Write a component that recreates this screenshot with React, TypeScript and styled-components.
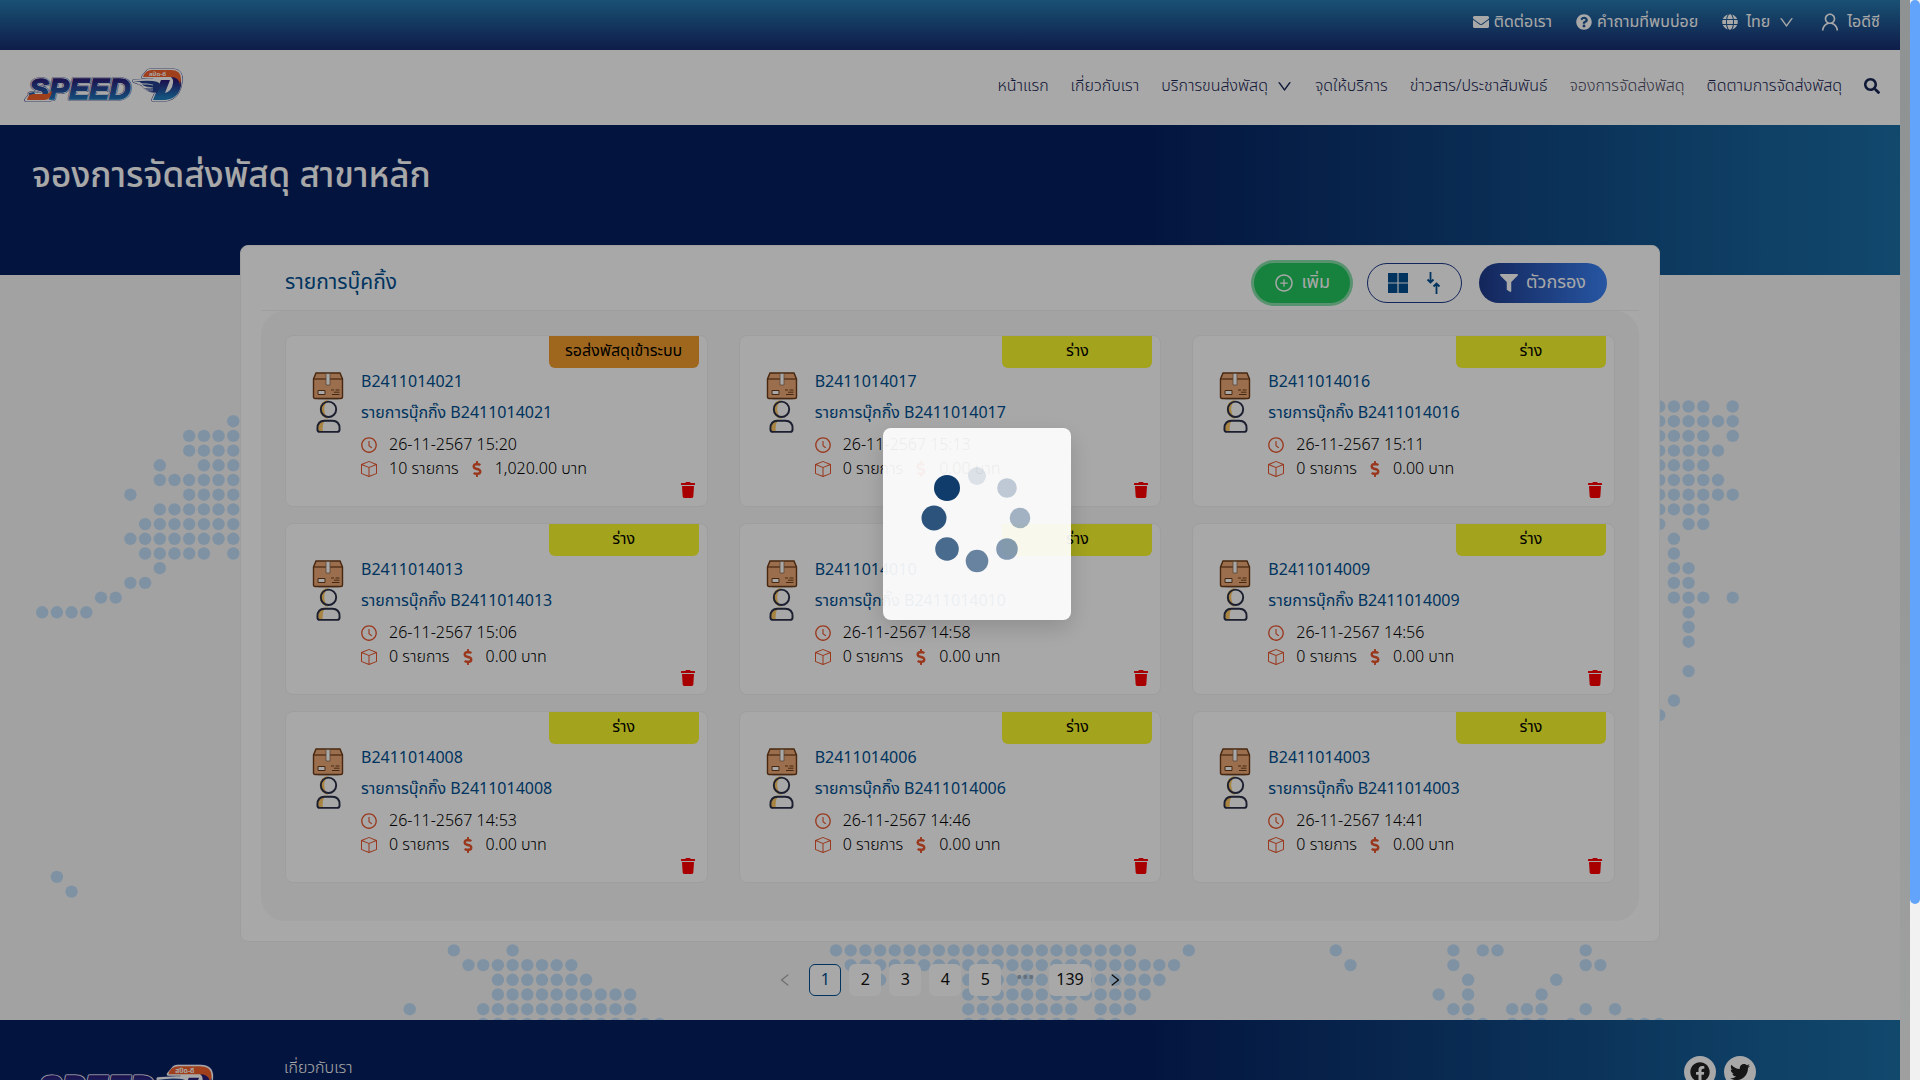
import React from "react";
import styled, { createGlobalStyle } from "styled-components";
import {
  FaEnvelope,
  FaQuestionCircle,
  FaGlobe,
  FaSearch,
  FaFilter,
  FaTrash,
  FaDollarSign,
  FaFacebook,
  FaTwitter,
} from "react-icons/fa";
import {
  AiOutlineDown,
  AiOutlineUser,
  AiOutlinePlusCircle,
  AiOutlineClockCircle,
  AiOutlineLeft,
  AiOutlineRight,
} from "react-icons/ai";
import { BsBox } from "react-icons/bs";

const navy = "#06205f";
const brandBlue = "#004f91";
const ink = "#172554";
const accent = "#e8552d";

const GlobalStyle = createGlobalStyle`
  *, *::before, *::after { box-sizing: border-box; }
  body {
    margin: 0;
    font-family: "Noto Sans Thai", "Noto Sans", "Liberation Sans", sans-serif;
    font-size: 16px;
    line-height: 24px;
    color: #000;
    overflow: hidden;
  }
  a { color: inherit; text-decoration: none; }
  button { font: inherit; color: inherit; border: 0; background: none; padding: 0; cursor: pointer; }
  h1, h2, h3, p, ul { margin: 0; padding: 0; font-weight: 400; }
  ul { list-style: none; }
  svg { display: block; flex: none; }
`;

const Viewport = styled.div`
  height: 100vh;
  overflow: hidden;
  display: grid;
  grid-template-columns: minmax(0, 1fr) 10px 10px;
`;

const Page = styled.div`
  background: #f6f6f6;
  min-width: 0;
`;

const Gutter = styled.div`
  background: linear-gradient(#d8dede, #f6f6f6);
`;

const ScrollTrack = styled.div`
  height: 100vh;
  background: #f1f1f1;
`;

const ScrollThumb = styled.div<{ $share: number }>`
  height: ${(p) => p.$share * 100}%;
  border-radius: 5px;
  background: #62a4fb;
`;

const TopBar = styled.div`
  display: flex;
  justify-content: flex-end;
  align-items: center;
  gap: 24px;
  height: 50px;
  padding: 0 20px 6px;
  color: #fff;
  background: linear-gradient(#277bb0, #172c70);
`;

const TopLink = styled.a<{ $gap?: number }>`
  display: flex;
  align-items: center;
  gap: ${(p) => p.$gap ?? 5}px;
`;

const NavBar = styled.header`
  display: flex;
  justify-content: space-between;
  align-items: center;
  height: 75px;
  padding: 0 20px 3px 24px;
  background: #fff;
  color: ${ink};
`;

const NavList = styled.nav`
  display: flex;
  align-items: center;
  gap: 22px;
  font-weight: 300;
`;

const NavLink = styled.a<{ $active?: boolean }>`
  display: flex;
  align-items: center;
  gap: 8px;
  color: ${(p) => (p.$active ? "#4a4a63" : ink)};
`;

const Hero = styled.section`
  height: 150px;
  padding: 28px 32px;
  color: #fff;
  background: linear-gradient(90deg, ${navy} 60%, #1b6fa6);
`;

const HeroTitle = styled.h1`
  font-size: 35px;
  line-height: 48px;
  font-weight: 500;
`;

const Main = styled.main`
  position: relative;
  display: flex;
  flex-direction: column;
  align-items: center;
  gap: 22px;
  padding-bottom: 24px;
`;

const MapBackdrop = styled.svg`
  position: absolute;
  inset: 0;
  width: 100%;
  height: 100%;
  fill: #c1def9;
`;

const Panel = styled.section`
  position: relative;
  width: 100%;
  max-width: 1420px;
  margin-top: -30px;
  padding: 0 20px 20px;
  border: 1px solid #f0f0f0;
  border-radius: 8px;
  background: #fff;
`;

const PanelHead = styled.div`
  display: flex;
  justify-content: space-between;
  align-items: center;
  height: 65px;
  padding: 9px 32px 0 24px;
  border-bottom: 1px solid #f0f0f0;
`;

const PanelTitle = styled.h2`
  font-size: 21px;
  line-height: 32px;
  color: ${brandBlue};
`;

const Actions = styled.div`
  display: flex;
  gap: 17px;
`;

const PillButton = styled.button<{ $kind: "add" | "view" | "filter" }>`
  display: flex;
  align-items: center;
  justify-content: center;
  gap: ${(p) => (p.$kind === "view" ? 18 : 8)}px;
  height: 40px;
  padding: 0 ${(p) => (p.$kind === "filter" ? 21 : 20)}px;
  border-radius: 20px;
  font-size: 18px;
  color: ${(p) => (p.$kind === "view" ? brandBlue : "#fff")};
  border: ${(p) => (p.$kind === "view" ? "1px solid #1e3a8a" : "0")};
  background: ${(p) =>
    p.$kind === "add"
      ? "#22c55e"
      : p.$kind === "filter"
        ? "linear-gradient(90deg, #1e3a8a, #3b82f6)"
        : "#fff"};
  box-shadow: ${(p) => (p.$kind === "add" ? "0 0 0 3px #86dea8" : "none")};
`;

const CardGrid = styled.ul`
  display: grid;
  grid-template-columns: repeat(3, minmax(0, 1fr));
  gap: 16px 31px;
  padding: 24px 24px 38px;
  border-radius: 24px;
  background: #f7f7f7;
`;

const Card = styled.li`
  display: grid;
  grid-template-columns: 32px minmax(0, 1fr);
  column-gap: 17px;
  height: 172px;
  padding: 0 8px 8px 26px;
  border: 1px solid #f0f0f0;
  border-radius: 8px;
  background: #fff;
`;

const Status = styled.p<{ $waiting: boolean }>`
  grid-column: 1 / -1;
  justify-self: end;
  width: 150px;
  height: 32px;
  line-height: 30px;
  text-align: center;
  border-radius: 0 0 6px 6px;
  background: ${(p) => (p.$waiting ? "#f29d2c" : "#f7f72d")};
`;

const CardIcons = styled.div`
  display: flex;
  flex-direction: column;
  align-items: center;
  padding-top: 3px;
`;

const CardBody = styled.div`
  display: flex;
  flex-direction: column;
  padding-top: 1px;
`;

const CardLine = styled.h3`
  font-size: 16px;
  line-height: 24px;
  margin-bottom: 7px;
  color: ${brandBlue};
`;

const MetaList = styled.div`
  margin-top: 1px;
  font-weight: 300;
`;

const Meta = styled.p`
  display: flex;
  align-items: center;
  gap: 12px;
  font-weight: inherit;
  & > svg {
    width: 12px;
    color: ${accent};
  }
  & > svg:first-child {
    width: 18px;
    margin: 0 -1px;
  }
`;

const DeleteButton = styled.button`
  grid-column: 1 / -1;
  justify-self: end;
  align-self: end;
  margin-right: 3px;
  color: #ff0000;
`;

const Pagination = styled.nav`
  position: relative;
  display: flex;
  gap: 8px;
`;

const PageButton = styled.button<{ $current?: boolean; $plain?: boolean }>`
  display: flex;
  align-items: center;
  justify-content: center;
  min-width: 32px;
  height: 32px;
  padding: 0 6px;
  border-radius: 6px;
  border: 1px solid ${(p) => (p.$current ? brandBlue : "transparent")};
  background: ${(p) => (p.$plain ? "transparent" : "#fff")};
  color: ${(p) => (p.$current ? brandBlue : "#111")};
  &:disabled { color: #aaa; }
`;

const Ellipsis = styled.span`
  width: 32px;
  line-height: 28px;
  text-align: center;
  color: #9aaaba;
`;

const Footer = styled.footer`
  display: flex;
  align-items: flex-start;
  min-height: 260px;
  padding: 36px 144px 0 33px;
  color: #fff;
  font-weight: 300;
  background: linear-gradient(90deg, ${navy} 60%, #1b6fa6);
`;

const FooterLogo = styled.div`
  width: 251px;
  padding-top: 8px;
`;

const Social = styled.div`
  display: flex;
  gap: 8px;
  margin-left: auto;
`;

const SocialLink = styled.a`
  display: grid;
  place-items: center;
  width: 32px;
  height: 32px;
  border-radius: 50%;
  background: #fff;
  color: #222;
`;

const Backdrop = styled.div`
  position: fixed;
  inset: 0 10px 0 0;
  background: rgba(0, 0, 0, 0.34);
`;

const LoaderBox = styled.div`
  position: absolute;
  left: 883px;
  top: 428px;
  width: 188px;
  height: 192px;
  border-radius: 8px;
  background: rgba(255, 255, 255, 0.92);
  box-shadow: 0 8px 24px rgba(0, 0, 0, 0.16);
`;

/* Dotted world map: each entry is [row, first column, last column]. */
const dotRuns: number[][] = [
  [0, 112, 115], [0, 117, 117],
  [1, 15, 15], [1, 112, 117],
  [2, 12, 15], [2, 112, 115], [2, 117, 117],
  [3, 12, 15], [3, 112, 116],
  [4, 10, 10], [4, 13, 15], [4, 112, 115],
  [5, 10, 15], [5, 112, 116],
  [6, 8, 8], [6, 12, 15], [6, 112, 117],
  [7, 10, 15], [7, 112, 115],
  [8, 9, 15], [8, 112, 112], [8, 114, 115],
  [9, 8, 15], [9, 113, 113],
  [10, 9, 13], [10, 15, 15], [10, 113, 113],
  [11, 10, 10], [11, 113, 114],
  [12, 8, 9], [12, 113, 114],
  [13, 6, 7], [13, 113, 115], [13, 117, 117],
  [14, 2, 5], [14, 114, 114],
  [15, 114, 114], [16, 114, 114], [18, 114, 114],
  [20, 113, 113], [21, 112, 112],
  [32, 3, 3], [33, 4, 4],
  [37, 30, 30], [37, 34, 34], [37, 56, 76], [37, 80, 80], [37, 90, 90], [37, 98, 98], [37, 100, 101], [37, 107, 107],
  [38, 31, 38], [38, 57, 79], [38, 91, 91], [38, 98, 98], [38, 107, 108],
  [39, 33, 39], [39, 59, 59], [39, 65, 78], [39, 99, 99], [39, 105, 105],
  [40, 33, 42], [40, 65, 77], [40, 97, 97], [40, 99, 99], [40, 104, 104],
  [41, 27, 27], [41, 32, 42], [41, 65, 72], [41, 74, 76], [41, 98, 99], [41, 102, 104], [41, 107, 107], [41, 109, 109],
  [42, 32, 44], [42, 65, 72], [42, 74, 75], [42, 99, 100], [42, 102, 104], [42, 106, 106], [42, 110, 112],
];

function WorldMap() {
  const dots: React.ReactElement[] = [];
  dotRuns.forEach(([row, from, to]) => {
    for (let col = from; col <= to; col++) {
      dots.push(
        <circle key={`${row}-${col}`} cx={12.8 + 14.7 * col} cy={131.5 + 14.7 * row} r="6.2" />
      );
    }
  });
  return (
    <MapBackdrop viewBox="0 0 1900 745" preserveAspectRatio="xMidYMin slice" aria-hidden="true">
      {dots}
    </MapBackdrop>
  );
}

const crestOutline =
  "M119 9l5-6q1-1 3-1h20q10 0 10 9-1 19-16 21h-12l4-9q-9 1-15-7l-8-3 20-1 5-3z";

function Logo({ width, id }: { width: number; id: string }) {
  const word = {
    fontFamily: '"Liberation Sans", Arial, sans-serif',
    fontWeight: 700,
    fontStyle: "italic",
  } as const;
  return (
    <svg width={width} viewBox="0 0 160 36" role="img" aria-label="Speed-D">
      <defs>
        <linearGradient id={`${id}-fill`} x1="0" y1="0" x2="0" y2="1">
          <stop offset="0.2" stopColor="#2a1c78" />
          <stop offset="0.9" stopColor="#1f7fc0" />
        </linearGradient>
      </defs>
      <g strokeLinejoin="round">
        <g fill="#2b3585" stroke="#2b3585" strokeWidth="3.600">
          <path d="M2 32h24l4-6H7z" />
          <text x="5" y="31" fontSize="30" {...word}>SPEED</text>
          <path d={crestOutline} />
        </g>
        <g fill="#fff" stroke="#fff" strokeWidth="2.800">
          <path d="M2 32h24l4-6H7z" />
          <text x="5" y="31" fontSize="30" {...word}>SPEED</text>
          <path d={crestOutline} />
        </g>
      </g>
      <text x="5" y="31" fontSize="30" fill={`url(#${id}-fill)`} stroke={`url(#${id}-fill)`} strokeWidth="1.400" {...word}>
        SPEED
      </text>
      <path d="M3 32q1-6 6-6h14l5-3q-1 9-8 9z" fill="#f2602a" />
      <path d="M137 12l-8 20h12q13-1 16-14 1-7-3-10h-9q5 2 4 7-1 8-8 10l5-13z" fill={`url(#${id}-fill)`} />
      <path d="M119 9q2-7 9-7h19q10 0 10 9l-1 6q-1-8-9-8z" fill="#f2602a" />
      <path d="M109 14q12-2 20-1 9 1 7 6l-3 6-4-1q-5 0-8-4 5 1 7 0-8-1-10-4 6 1 9 0-9 1-11-2z" fill="#24408f" />
      <path d="M114 16q9-1 15 1M118 19q7 0 11 1M121 22q5 0 8 0" stroke="#fff" strokeWidth="0.800" fill="none" />
      <text x="125" y="8" fontSize="6" fill="#fff" fontWeight="700">สปีด-ดี</text>
    </svg>
  );
}

function ParcelIcon() {
  return (
    <svg width="32" height="28" viewBox="0 0 32 28" aria-hidden="true">
      <path d="M4 26h25l-3 2H7z" fill="#d5d5d5" />
      <path d="M4 1h24l2.500 6v18q0 1.500-1.500 1.500H3q-1.500 0-1.500-1.500V7z" fill="#eba877" stroke="#6d3c17" strokeWidth="1.400" />
      <path d="M2 7h28" stroke="#6d3c17" strokeWidth="1.200" />
      <path d="M14 1.500h4V13h-4z" fill="#fff" stroke="#8a6a50" strokeWidth="0.800" />
      <path d="M6 18.500h7v4H6z" fill="#fff" stroke="#6d3c17" />
      <path d="M19 18h3m1.500 0h4M22 20.200h5.500M20 22.500h7.500" stroke="#6d3c17" />
    </svg>
  );
}

function PersonIcon() {
  return (
    <svg width="25" height="33" viewBox="0 0 26 34" aria-hidden="true">
      <path d="M10 1.500Q5 3.500 5 9.500 5 15 10 17.500 7.500 13.500 7.500 9.500 7.500 5 10 1.500z" fill="#ffc966" stroke="#ffc966" strokeWidth="2" />
      <path d="M3 32q-1-10 5-10.500-2.500 3-2 10.500z" fill="#ffc966" stroke="#ffc966" strokeWidth="2" />
      <circle cx="13" cy="9.500" r="8" fill="none" stroke="#2a3048" strokeWidth="2" />
      <path d="M9 21.500h8q7.500 0 7.500 8v1q0 2.500-2.500 2.500H4q-2.500 0-2.500-2.500v-1q0-8 7.500-8z" fill="none" stroke="#2a3048" strokeWidth="2" />
    </svg>
  );
}

interface Booking {
  code: string;
  date: string;
  items: number;
  total: string;
  waiting?: boolean;
}

const bookings: Booking[] = [
  { code: "B2411014021", date: "26-11-2567 15:20", items: 10, total: "1,020.00", waiting: true },
  { code: "B2411014017", date: "26-11-2567 15:13", items: 0, total: "0.00" },
  { code: "B2411014016", date: "26-11-2567 15:11", items: 0, total: "0.00" },
  { code: "B2411014013", date: "26-11-2567 15:06", items: 0, total: "0.00" },
  { code: "B2411014010", date: "26-11-2567 14:58", items: 0, total: "0.00" },
  { code: "B2411014009", date: "26-11-2567 14:56", items: 0, total: "0.00" },
  { code: "B2411014008", date: "26-11-2567 14:53", items: 0, total: "0.00" },
  { code: "B2411014006", date: "26-11-2567 14:46", items: 0, total: "0.00" },
  { code: "B2411014003", date: "26-11-2567 14:41", items: 0, total: "0.00" },
];

function BookingCard({ booking }: { booking: Booking }) {
  return (
    <Card>
      <Status $waiting={!!booking.waiting}>{booking.waiting ? "รอส่งพัสดุเข้าระบบ" : "ร่าง"}</Status>
      <CardIcons>
        <ParcelIcon />
        <PersonIcon />
      </CardIcons>
      <CardBody>
        <CardLine>{booking.code}</CardLine>
        <CardLine>รายการบุ๊กกิ๊ง {booking.code}</CardLine>
        <MetaList>
          <Meta>
            <AiOutlineClockCircle size={18} />
            {booking.date}
          </Meta>
          <Meta>
            <BsBox size={16} />
            {booking.items} รายการ
            <FaDollarSign size={16} />
            {booking.total} บาท
          </Meta>
        </MetaList>
      </CardBody>
      <DeleteButton type="button" aria-label="ลบ">
        <FaTrash size={16} />
      </DeleteButton>
    </Card>
  );
}

/* Spinner dots, clockwise from the top: x, y, radius, opacity. */
const spinnerDots = [
  [94, 48, 9, 0.12],
  [124, 60, 9.8, 0.25],
  [137, 90, 10.3, 0.37],
  [124, 121, 10.8, 0.5],
  [94, 133, 11.3, 0.62],
  [64, 121, 11.8, 0.75],
  [51, 90, 12.5, 0.88],
  [64, 60, 13, 1],
];

export default function App() {
  return (
    <>
      <GlobalStyle />
      <Viewport>
        <Page>
          <TopBar>
            <TopLink href="#contact"><FaEnvelope size={16} />ติดต่อเรา</TopLink>
            <TopLink href="#faq"><FaQuestionCircle size={16} />คำถามที่พบบ่อย</TopLink>
            <TopLink href="#lang" $gap={8}><FaGlobe size={16} />ไทย<AiOutlineDown size={17} /></TopLink>
            <TopLink href="#account" $gap={6}><AiOutlineUser size={22} />ไอดีซี</TopLink>
          </TopBar>
          <NavBar>
            <a href="#home"><Logo width={160} id="header-logo" /></a>
            <NavList>
              <NavLink href="#home">หน้าแรก</NavLink>
              <NavLink href="#about">เกี่ยวกับเรา</NavLink>
              <NavLink href="#services">บริการขนส่งพัสดุ<AiOutlineDown size={17} /></NavLink>
              <NavLink href="#points">จุดให้บริการ</NavLink>
              <NavLink href="#news">ข่าวสาร/ประชาสัมพันธ์</NavLink>
              <NavLink href="#booking" $active>จองการจัดส่งพัสดุ</NavLink>
              <NavLink href="#tracking">ติดตามการจัดส่งพัสดุ</NavLink>
              <button type="button" aria-label="ค้นหา"><FaSearch size={16} /></button>
            </NavList>
          </NavBar>
          <Hero>
            <HeroTitle>จองการจัดส่งพัสดุ สาขาหลัก</HeroTitle>
          </Hero>
          <Main>
            <WorldMap />
            <Panel>
              <PanelHead>
                <PanelTitle>รายการบุ๊คกิ้ง</PanelTitle>
                <Actions>
                  <PillButton type="button" $kind="add"><AiOutlinePlusCircle size={20} />เพิ่ม</PillButton>
                  <PillButton type="button" $kind="view" aria-label="มุมมอง">
                    <svg width="20" height="20" viewBox="0 0 20 20" fill="currentColor" aria-hidden="true">
                      <path d="M0 0h9.400v9.400H0zM10.600 0H20v9.400h-9.400zM0 10.600h9.400V20H0zM10.600 10.600H20V20h-9.400z" />
                    </svg>
                    <svg width="15" height="22" viewBox="0 0 15 22" fill="none" stroke="currentColor" strokeWidth="1.800" aria-hidden="true">
                      <path d="M4.500 0v10M1.500 7.500l3 3 3-3M10.500 22V12M7.500 14.500l3-3 3 3" />
                    </svg>
                  </PillButton>
                  <PillButton type="button" $kind="filter"><FaFilter size={18} />ตัวกรอง</PillButton>
                </Actions>
              </PanelHead>
              <CardGrid>
                {bookings.map((b) => (
                  <BookingCard key={b.code} booking={b} />
                ))}
              </CardGrid>
            </Panel>
            <Pagination aria-label="หน้า">
              <PageButton type="button" $plain disabled aria-label="ก่อนหน้า"><AiOutlineLeft size={16} /></PageButton>
              <PageButton type="button" $current>1</PageButton>
              <PageButton type="button">2</PageButton>
              <PageButton type="button">3</PageButton>
              <PageButton type="button">4</PageButton>
              <PageButton type="button">5</PageButton>
              <Ellipsis>•••</Ellipsis>
              <PageButton type="button">139</PageButton>
              <PageButton type="button" $plain aria-label="ถัดไป"><AiOutlineRight size={16} /></PageButton>
            </Pagination>
          </Main>
          <Footer>
            <FooterLogo><Logo width={182} id="footer-logo" /></FooterLogo>
            <a href="#about">เกี่ยวกับเรา</a>
            <Social>
              <SocialLink href="#facebook" aria-label="Facebook"><FaFacebook size={20} /></SocialLink>
              <SocialLink href="#twitter" aria-label="Twitter"><FaTwitter size={20} /></SocialLink>
            </Social>
          </Footer>
        </Page>
        <Gutter />
        <ScrollTrack>
          <ScrollThumb $share={0.837} />
        </ScrollTrack>
      </Viewport>
      <Backdrop>
        <LoaderBox role="status" aria-label="กำลังโหลด">
          <svg width="188" height="192" viewBox="0 0 188 192" fill="#0f3c6b" aria-hidden="true">
            {spinnerDots.map(([x, y, r, o]) => (
              <circle key={`${x}-${y}`} cx={x} cy={y} r={r} opacity={o} />
            ))}
          </svg>
        </LoaderBox>
      </Backdrop>
    </>
  );
}
